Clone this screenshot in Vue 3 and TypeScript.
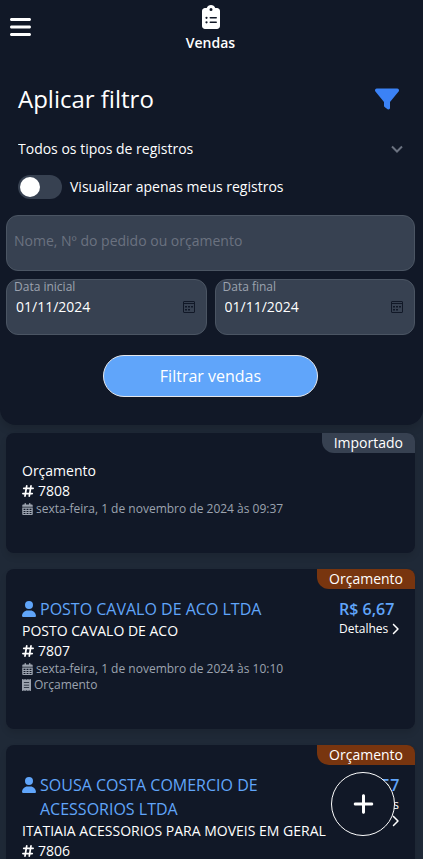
<script setup lang="ts">
import { ref } from 'vue'

interface Sale {
  id: number
  status: string
  imported?: boolean
  customer?: string
  title: string
  date: string
  kind?: string
  price?: string
  narrow?: boolean
}

const recordType = ref('todos')
const onlyMine = ref(false)
const search = ref('')
const startDate = ref('01/11/2024')
const endDate = ref('01/11/2024')

const sales: Sale[] = [
  {
    id: 7808,
    status: 'Importado',
    imported: true,
    title: 'Orçamento',
    date: 'sexta-feira, 1 de novembro de 2024 às 09:37',
  },
  {
    id: 7807,
    status: 'Orçamento',
    customer: 'POSTO CAVALO DE ACO LTDA',
    title: 'POSTO CAVALO DE ACO',
    date: 'sexta-feira, 1 de novembro de 2024 às 10:10',
    kind: 'Orçamento',
    price: 'R$ 6,67',
  },
  {
    id: 7806,
    status: 'Orçamento',
    customer: 'SOUSA COSTA COMERCIO DE ACESSORIOS LTDA',
    title: 'ITATIAIA ACESSORIOS PARA MOVEIS EM GERAL',
    date: '',
    price: 'R$ 6,57',
    narrow: true,
  },
]
</script>

<template>
  <div class="page">
    <section class="panel">
      <header class="topbar">
        <button class="menu" type="button" aria-label="Menu">
          <svg width="21" height="24" viewBox="0 0 448 512"><path d="M0 96C0 78.3 14.3 64 32 64H416c17.7 0 32 14.3 32 32s-14.3 32-32 32H32C14.3 128 0 113.7 0 96zM0 256c0-17.7 14.3-32 32-32H416c17.7 0 32 14.3 32 32s-14.3 32-32 32H32c-17.7 0-32-14.3-32-32zM448 416c0 17.7-14.3 32-32 32H32c-17.7 0-32-14.3-32-32s14.3-32 32-32H416c17.7 0 32 14.3 32 32z" /></svg>
        </button>
        <div class="brand">
          <svg width="18" height="24" viewBox="0 0 384 512"><path d="M192 0c-41.8 0-77.4 26.7-90.5 64H64C28.7 64 0 92.7 0 128V448c0 35.3 28.7 64 64 64H320c35.3 0 64-28.7 64-64V128c0-35.3-28.7-64-64-64H282.5C269.4 26.7 233.8 0 192 0zm0 64a32 32 0 1 1 0 64 32 32 0 1 1 0-64zM72 272a24 24 0 1 1 48 0 24 24 0 1 1 -48 0zm104-16H304c8.8 0 16 7.2 16 16s-7.2 16-16 16H176c-8.8 0-16-7.2-16-16s7.2-16 16-16zM72 368a24 24 0 1 1 48 0 24 24 0 1 1 -48 0zm88 0c0-8.8 7.2-16 16-16H304c8.8 0 16 7.2 16 16s-7.2 16-16 16H176c-8.8 0-16-7.2-16-16z" /></svg>
          <span>Vendas</span>
        </div>
      </header>

      <form class="filter" @submit.prevent>
        <div class="heading">
          <h1>Aplicar filtro</h1>
          <svg class="funnel" width="24" height="24" viewBox="0 0 512 512"><path d="M3.9 54.9C10.5 40.9 24.5 32 40 32H472c15.5 0 29.5 8.9 36.1 22.9s4.6 30.5-5.2 42.5L320 320.9V448c0 12.1-6.8 23.2-17.7 28.6s-23.8 4.3-33.5-3l-64-48c-8.1-6-12.8-15.5-12.8-25.6V320.9L9 97.3C-.7 85.4-2.8 68.8 3.9 54.9z" /></svg>
        </div>

        <div class="picker">
          <select v-model="recordType" aria-label="Tipo de registro">
            <option value="todos">Todos os tipos de registros</option>
          </select>
          <svg class="arrow" width="12" height="8" viewBox="0 0 12 8"><path d="M1 1.500l5 5 5-5" /></svg>
        </div>

        <label class="toggle">
          <input v-model="onlyMine" type="checkbox" />
          <span>Visualizar apenas meus registros</span>
        </label>

        <div class="fields">
          <input v-model="search" class="field search" type="text" aria-label="Pesquisa" placeholder="Nome, Nº do pedido ou orçamento" />
          <div class="field date">
            <label for="start">Data inicial</label>
            <div class="date-row">
              <input id="start" v-model="startDate" type="text" inputmode="numeric" />
              <button type="button" aria-label="Abrir calendário inicial">
                <svg width="14" height="14" viewBox="0 0 14 14"><path class="frame" d="M2 1.500h10a.5.5 0 0 1 .5.5v10a.5.5 0 0 1-.5.5H2a.5.5 0 0 1-.5-.5V2a.5.5 0 0 1 .5-.5zM1.500 3.500h11" /><path d="M6 6h2v1.500H6zM9 6h2v1.500H9zM3 6h2v1.500H3zM3 9h2v1.500H3zM6 9h2v1.500H6z" /></svg>
              </button>
            </div>
          </div>
          <div class="field date">
            <label for="end">Data final</label>
            <div class="date-row">
              <input id="end" v-model="endDate" type="text" inputmode="numeric" />
              <button type="button" aria-label="Abrir calendário final">
                <svg width="14" height="14" viewBox="0 0 14 14"><path class="frame" d="M2 1.500h10a.5.5 0 0 1 .5.5v10a.5.5 0 0 1-.5.5H2a.5.5 0 0 1-.5-.5V2a.5.5 0 0 1 .5-.5zM1.500 3.500h11" /><path d="M6 6h2v1.500H6zM9 6h2v1.500H9zM3 6h2v1.500H3zM3 9h2v1.500H3zM6 9h2v1.500H6z" /></svg>
              </button>
            </div>
          </div>
        </div>

        <button class="submit" type="submit">Filtrar vendas</button>
      </form>
    </section>

    <main class="list">
      <article v-for="sale in sales" :key="sale.id" class="card">
        <span class="badge" :class="{ imported: sale.imported }">{{ sale.status }}</span>
        <div class="info">
          <h2 v-if="sale.customer" class="customer">
            <svg width="14" height="16" viewBox="0 0 448 512"><path d="M224 256A128 128 0 1 0 224 0a128 128 0 1 0 0 256zm-45.7 48C79.8 304 0 383.8 0 482.3C0 498.7 13.3 512 29.7 512H418.3c16.4 0 29.7-13.3 29.7-29.7C448 383.8 368.2 304 269.7 304H178.3z" /></svg>
            <span>{{ sale.customer }}</span>
          </h2>
          <p class="line">{{ sale.title }}</p>
          <p class="line number">
            <svg width="12" height="14" viewBox="0 0 448 512"><path d="M181.3 32.4c17.4 2.9 29.2 19.4 26.3 36.8L197.8 128h95.1l11.5-69.3c2.9-17.4 19.4-29.2 36.8-26.3s29.2 19.4 26.3 36.8L357.8 128H416c17.7 0 32 14.3 32 32s-14.3 32-32 32H347.1L325.8 320H384c17.7 0 32 14.3 32 32s-14.3 32-32 32H315.1l-11.5 69.3c-2.9 17.4-19.4 29.2-36.8 26.3s-29.2-19.4-26.3-36.8l9.8-58.7H155.1l-11.5 69.3c-2.9 17.4-19.4 29.2-36.8 26.3s-29.2-19.4-26.3-36.8L90.2 384H32c-17.7 0-32-14.3-32-32s14.3-32 32-32h68.9l21.3-128H64c-17.7 0-32-14.3-32-32s14.3-32 32-32h68.9l11.5-69.3c2.9-17.4 19.4-29.2 36.8-26.3zM187.1 192L165.8 320h95.1l21.3-128H187.1z" /></svg>
            <span>{{ sale.id }}</span>
          </p>
          <p v-if="sale.date" class="meta">
            <svg width="11" height="12" viewBox="0 0 448 512"><path fill-rule="evenodd" d="M128 0c17.700 0 32 14.300 32 32V64H288V32c0-17.700 14.300-32 32-32s32 14.300 32 32V64h48c26.500 0 48 21.500 48 48v48H0V112C0 85.500 21.500 64 48 64H96V32c0-17.700 14.300-32 32-32zM0 192H448V464c0 26.500-21.500 48-48 48H48c-26.500 0-48-21.500-48-48zM56 240v56h80v-56zM184 240v56h80v-56zM312 240v56h80v-56zM56 344v40h80v-40zM184 344v40h80v-40zM312 344v40h80v-40zM56 424v40h80v-40zM184 424v40h80v-40zM312 424v40h80v-40z" /></svg>
            <span>{{ sale.date }}</span>
          </p>
          <p v-if="sale.kind" class="meta kind">
            <svg width="9" height="12" viewBox="0 0 384 512"><path fill-rule="evenodd" d="M0 8L40 0l40 30 48-30 64 30 64-30 48 30 40-30 40 8V504l-40 8-40-30-48 30-64-30-64 30-48-30-40 30-40-8zM80 136v32H304v-32zM80 240v32H304v-32zM80 344v32H304v-32z" /></svg>
            <span>{{ sale.kind }}</span>
          </p>
        </div>
        <div v-if="sale.price" class="amount" :class="{ narrow: sale.narrow }">
          <strong>{{ sale.price }}</strong>
          <a href="#">Detalhes <svg width="8" height="12" viewBox="0 0 320 512"><path d="M310.6 233.4c12.5 12.5 12.5 32.8 0 45.3l-192 192c-12.5 12.5-32.8 12.5-45.3 0s-12.5-32.8 0-45.3L242.7 256 73.4 86.6c-12.5-12.5-12.5-32.8 0-45.3s32.8-12.5 45.3 0l192 192z" /></svg></a>
        </div>
      </article>
    </main>

    <button class="add" type="button" aria-label="Adicionar">
      <svg width="21" height="24" viewBox="0 0 448 512"><path d="M256 80c0-17.700-14.300-32-32-32s-32 14.300-32 32V224H48c-17.700 0-32 14.300-32 32s14.300 32 32 32H192V432c0 17.700 14.300 32 32 32s32-14.300 32-32V288H400c17.700 0 32-14.300 32-32s-14.300-32-32-32H256V80z" /></svg>
    </button>
  </div>
</template>

<style>
body {
  background: #1f2937;
  overflow: hidden;
}
#app {
  height: 100vh;
  overflow-y: auto;
  scrollbar-width: none;
}
</style>

<style scoped>
.page,
.page * {
  box-sizing: border-box;
}
.page {
  color: #fff;
  font-family: 'Open Sans', 'Noto Sans', sans-serif;
  font-size: 14px;
  line-height: 20px;
}
h1,
h2,
p {
  margin: 0;
  font-weight: 400;
}
button,
input,
select {
  margin: 0;
  padding: 0;
  border: 0;
  background: none;
  color: inherit;
  font: inherit;
}
svg {
  flex: none;
  display: block;
  fill: currentColor;
}
.panel {
  padding: 4px 8px 28px 6px;
  background: #111827;
  border-radius: 0 0 16px 16px;
  box-shadow: 0 4px 8px rgba(0, 0, 0, 0.15);
}
.topbar {
  display: grid;
  grid-template-columns: 21px 1fr 21px;
  align-items: center;
  height: 50px;
  padding: 0 4px;
}
.menu {
  align-self: start;
  padding-top: 11px;
}
.brand {
  display: flex;
  flex-direction: column;
  align-items: center;
  gap: 4px;
  font-weight: 600;
}
.heading {
  display: flex;
  justify-content: space-between;
  align-items: center;
  margin-top: 29px;
  padding: 0 16px 0 12px;
  height: 32px;
}
h1 {
  font-size: 24px;
  line-height: 32px;
}
.funnel {
  color: #3b82f6;
}
.picker {
  display: grid;
  align-items: center;
  margin: 16px 12px 0;
  height: 36px;
}
.picker select {
  grid-area: 1 / 1;
  width: 100%;
  height: 36px;
  appearance: none;
  outline: none;
}
.picker .arrow {
  grid-area: 1 / 1;
  justify-self: end;
  fill: none;
  stroke: #6b7280;
  stroke-width: 2;
  pointer-events: none;
}
.toggle {
  display: flex;
  align-items: center;
  gap: 8px;
  margin: 8px 12px 0;
  height: 24px;
}
.toggle input {
  appearance: none;
  width: 44px;
  height: 24px;
  padding: 2px;
  border-radius: 12px;
  background: #374151;
}
.toggle input::before {
  content: '';
  display: block;
  width: 20px;
  height: 20px;
  border-radius: 50%;
  background: #fff;
}
.toggle input:checked {
  background: #3b82f6;
}
.toggle input:checked::before {
  margin-left: 20px;
}
.fields {
  display: grid;
  grid-template-columns: 1fr 1fr;
  gap: 8px;
  margin-top: 16px;
}
.field {
  min-width: 0;
  height: 56px;
  border: 1px solid #4b5563;
  border-radius: 12px;
  background: #374151;
}
.search {
  grid-column: 1 / -1;
  padding: 0 7px 6px;
}
.search::placeholder {
  color: #6b7280;
}
.date label {
  display: block;
  padding-left: 7px;
  color: #9ca3af;
  font-size: 12px;
  line-height: 14px;
}
.date-row {
  display: flex;
  align-items: center;
  padding: 0 10px 0 9px;
  height: 26px;
}
.date-row input {
  flex: 1;
  min-width: 0;
}
.date-row button {
  color: #111827;
}
.date-row .frame {
  fill: none;
  stroke: currentColor;
}
.submit {
  display: block;
  width: 215px;
  height: 42px;
  margin: 20px auto 0;
  border: 1px solid #e5e7eb;
  border-radius: 21px;
  background: #60a5fa;
  font-size: 16px;
  line-height: 24px;
}
.list {
  display: grid;
  gap: 16px;
  padding: 8px 8px 16px 6px;
}
.card {
  position: relative;
  display: flex;
  justify-content: space-between;
  padding: 28px 16px 36px;
  border-radius: 8px;
  background: #111827;
  box-shadow: 0 4px 6px rgba(0, 0, 0, 0.1);
}
.badge {
  position: absolute;
  top: 0;
  right: 0;
  padding: 0 12px;
  border-radius: 0 8px 0 12px;
  background: #78350f;
}
.badge.imported {
  background: #374151;
}
.customer {
  display: flex;
  gap: 4px;
  color: #60a5fa;
  font-size: 16px;
  line-height: 24px;
}
.customer svg {
  margin-top: 4px;
}
.line {
  white-space: nowrap;
}
.number {
  display: flex;
  align-items: center;
  gap: 4px;
}
.meta {
  display: flex;
  align-items: center;
  gap: 3px;
  color: #9ca3af;
  font-size: 12px;
  line-height: 16px;
}
.amount {
  width: 60px;
  white-space: nowrap;
}
.amount strong {
  display: block;
  color: #60a5fa;
  font-size: 16px;
  font-weight: 600;
  line-height: 24px;
}
.amount a {
  display: block;
  color: inherit;
  font-size: 12px;
  line-height: 16px;
  text-decoration: none;
}
.amount svg {
  display: inline-block;
  vertical-align: -2px;
}
.amount.narrow {
  width: 55px;
  text-align: right;
}
.narrow a {
  white-space: normal;
}
.add {
  position: fixed;
  right: 28px;
  bottom: 23px;
  display: grid;
  place-items: center;
  width: 64px;
  height: 64px;
  border: 1px solid #fff;
  border-radius: 50%;
  background: #111827;
}
</style>
